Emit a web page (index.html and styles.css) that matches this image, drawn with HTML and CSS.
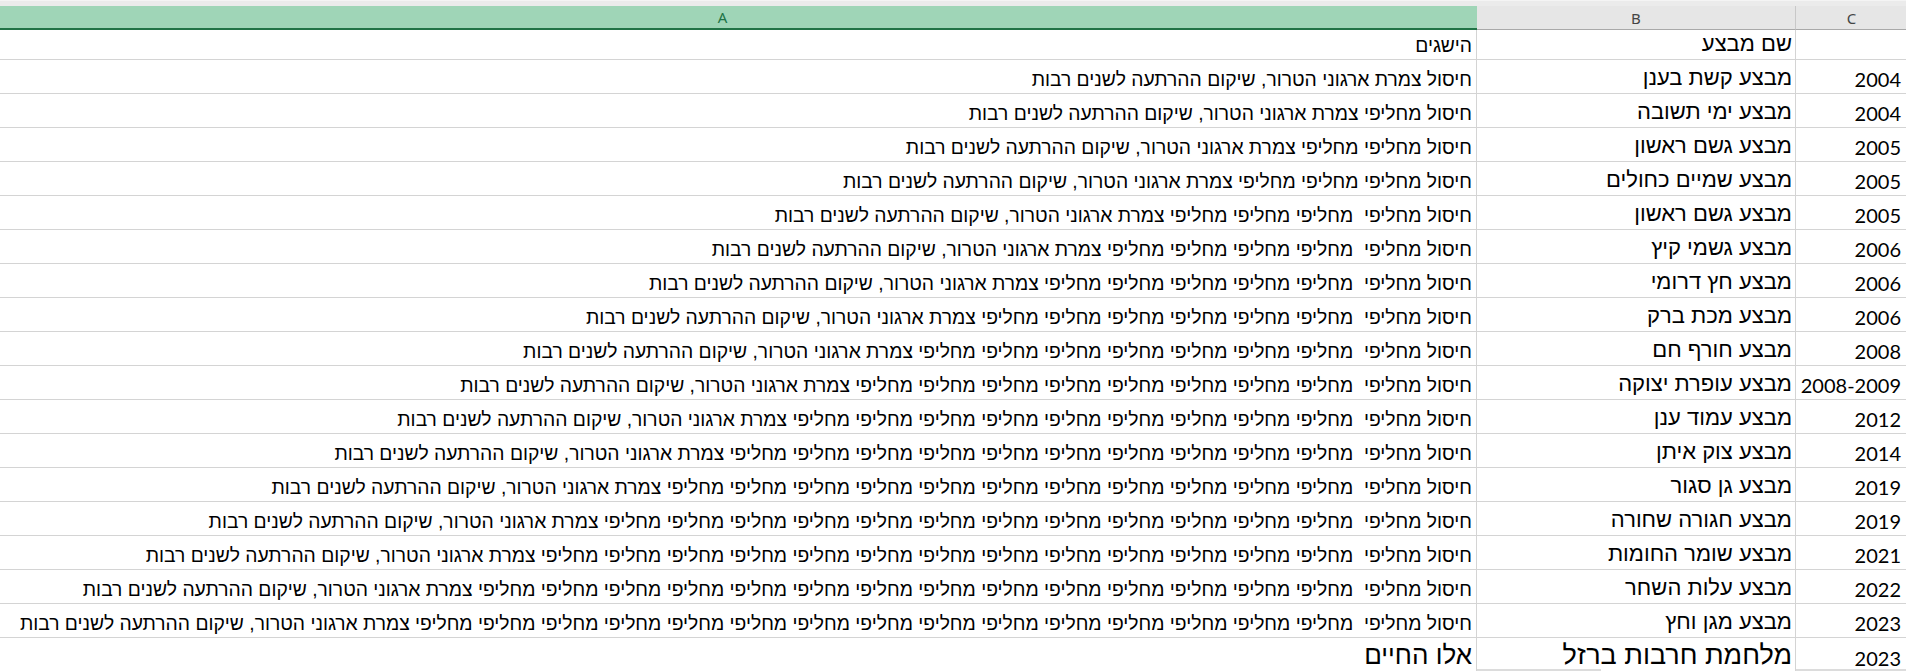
FILE: index.html
```html
<!DOCTYPE html>
<html lang="he">
<head>
    <meta charset="UTF-8">
    <meta name="viewport" content="width=device-width, initial-scale=1.0">
    <title>מבצעים - גיליון</title>
    <link rel="stylesheet" href="styles.css">
</head>
<body>
    <div class="sheet">
        <div class="topbar"></div>

        <div class="row heads">
            <div class="colhead active">A</div>
            <div class="colhead">B</div>
            <div class="colhead">C</div>
        </div>

        <div class="row first">
            <div class="cell a">הישגים</div>
            <div class="cell b">שם מבצע</div>
            <div class="cell c"></div>
        </div>

        <div class="row">
            <div class="cell a">חיסול צמרת ארגוני הטרור, שיקום ההרתעה לשנים רבות</div>
            <div class="cell b">מבצע קשת בענן</div>
            <div class="cell c">2004</div>
        </div>
        <div class="row">
            <div class="cell a">חיסול מחליפי צמרת ארגוני הטרור, שיקום ההרתעה לשנים רבות</div>
            <div class="cell b">מבצע ימי תשובה </div>
            <div class="cell c">2004</div>
        </div>
        <div class="row">
            <div class="cell a">חיסול מחליפי מחליפי צמרת ארגוני הטרור, שיקום ההרתעה לשנים רבות</div>
            <div class="cell b">מבצע גשם ראשון </div>
            <div class="cell c">2005</div>
        </div>
        <div class="row">
            <div class="cell a">חיסול מחליפי מחליפי מחליפי צמרת ארגוני הטרור, שיקום ההרתעה לשנים רבות</div>
            <div class="cell b">מבצע שמיים כחולים</div>
            <div class="cell c">2005</div>
        </div>
        <div class="row">
            <div class="cell a">חיסול מחליפי  מחליפי מחליפי מחליפי צמרת ארגוני הטרור, שיקום ההרתעה לשנים רבות</div>
            <div class="cell b">מבצע גשם ראשון </div>
            <div class="cell c">2005</div>
        </div>
        <div class="row">
            <div class="cell a">חיסול מחליפי  מחליפי מחליפי מחליפי מחליפי צמרת ארגוני הטרור, שיקום ההרתעה לשנים רבות</div>
            <div class="cell b">מבצע גשמי קיץ</div>
            <div class="cell c">2006</div>
        </div>
        <div class="row">
            <div class="cell a">חיסול מחליפי  מחליפי מחליפי מחליפי מחליפי מחליפי צמרת ארגוני הטרור, שיקום ההרתעה לשנים רבות</div>
            <div class="cell b">מבצע חץ דרומי</div>
            <div class="cell c">2006</div>
        </div>
        <div class="row">
            <div class="cell a">חיסול מחליפי  מחליפי מחליפי מחליפי מחליפי מחליפי מחליפי צמרת ארגוני הטרור, שיקום ההרתעה לשנים רבות</div>
            <div class="cell b">מבצע מכת ברק </div>
            <div class="cell c">2006</div>
        </div>
        <div class="row">
            <div class="cell a">חיסול מחליפי  מחליפי מחליפי מחליפי מחליפי מחליפי מחליפי מחליפי צמרת ארגוני הטרור, שיקום ההרתעה לשנים רבות</div>
            <div class="cell b">מבצע חורף חם</div>
            <div class="cell c">2008</div>
        </div>
        <div class="row">
            <div class="cell a">חיסול מחליפי  מחליפי מחליפי מחליפי מחליפי מחליפי מחליפי מחליפי מחליפי צמרת ארגוני הטרור, שיקום ההרתעה לשנים רבות</div>
            <div class="cell b">מבצע עופרת יצוקה</div>
            <div class="cell c">2008-2009</div>
        </div>
        <div class="row">
            <div class="cell a">חיסול מחליפי  מחליפי מחליפי מחליפי מחליפי מחליפי מחליפי מחליפי מחליפי מחליפי צמרת ארגוני הטרור, שיקום ההרתעה לשנים רבות</div>
            <div class="cell b">מבצע עמוד ענן </div>
            <div class="cell c">2012</div>
        </div>
        <div class="row">
            <div class="cell a">חיסול מחליפי  מחליפי מחליפי מחליפי מחליפי מחליפי מחליפי מחליפי מחליפי מחליפי מחליפי צמרת ארגוני הטרור, שיקום ההרתעה לשנים רבות</div>
            <div class="cell b">מבצע צוק איתן </div>
            <div class="cell c">2014</div>
        </div>
        <div class="row">
            <div class="cell a">חיסול מחליפי  מחליפי מחליפי מחליפי מחליפי מחליפי מחליפי מחליפי מחליפי מחליפי מחליפי מחליפי צמרת ארגוני הטרור, שיקום ההרתעה לשנים רבות</div>
            <div class="cell b">מבצע גן סגור </div>
            <div class="cell c">2019</div>
        </div>
        <div class="row">
            <div class="cell a">חיסול מחליפי  מחליפי מחליפי מחליפי מחליפי מחליפי מחליפי מחליפי מחליפי מחליפי מחליפי מחליפי מחליפי צמרת ארגוני הטרור, שיקום ההרתעה לשנים רבות</div>
            <div class="cell b">מבצע חגורה שחורה </div>
            <div class="cell c">2019</div>
        </div>
        <div class="row">
            <div class="cell a">חיסול מחליפי  מחליפי מחליפי מחליפי מחליפי מחליפי מחליפי מחליפי מחליפי מחליפי מחליפי מחליפי מחליפי מחליפי צמרת ארגוני הטרור, שיקום ההרתעה לשנים רבות</div>
            <div class="cell b">מבצע שומר החומות</div>
            <div class="cell c">2021</div>
        </div>
        <div class="row">
            <div class="cell a">חיסול מחליפי  מחליפי מחליפי מחליפי מחליפי מחליפי מחליפי מחליפי מחליפי מחליפי מחליפי מחליפי מחליפי מחליפי מחליפי צמרת ארגוני הטרור, שיקום ההרתעה לשנים רבות</div>
            <div class="cell b">מבצע עלות השחר </div>
            <div class="cell c">2022</div>
        </div>
        <div class="row">
            <div class="cell a">חיסול מחליפי  מחליפי מחליפי מחליפי מחליפי מחליפי מחליפי מחליפי מחליפי מחליפי מחליפי מחליפי מחליפי מחליפי מחליפי מחליפי צמרת ארגוני הטרור, שיקום ההרתעה לשנים רבות</div>
            <div class="cell b">מבצע מגן וחץ</div>
            <div class="cell c">2023</div>
        </div>
        <div class="row big">
            <div class="cell a">אלו החיים  </div>
            <div class="cell b">מלחמת חרבות ברזל</div>
            <div class="cell c">2023</div>
        </div>
        <div class="row stub">
            <div class="cell"></div>
            <div class="cell"><span class="seg"></span></div>
            <div class="cell"><span class="seg wide"></span></div>
        </div>
    </div>
</body>
</html>
```

FILE: styles.css
```css
body {
    margin: 0;
    background: #ffffff;
    overflow: hidden;
}
.sheet {
    margin-left: -32px;
    width: 1942px;
}
.topbar {
    height: 5px;
    background: #ebebeb;
    border-top: 1px solid #f4f4f4;
}
.row {
    display: grid;
    grid-template-columns: 1509px 319px 112px;
    height: 34px;
}
.heads {
    height: 24px;
}
.colhead {
    display: flex;
    align-items: center;
    justify-content: center;
    background: #e6e6e6;
    border-right: 1px solid #c8c8c8;
    border-bottom: 1px solid #a9a9a9;
    font-family: "Noto Sans", "Open Sans", sans-serif;
    font-size: 15px;
    color: #444444;
}
.colhead.active {
    background: #9fd5b7;
    color: #217346;
    border-right: none;
    border-bottom: 2px solid #217346;
}
.first {
    height: 30px;
}
.cell {
    display: flex;
    align-items: flex-end;
    overflow: visible;
    white-space: pre;
    padding-bottom: 2px;
    border-right: 1px solid #d4d4d4;
    border-bottom: 1px solid #d4d4d4;
    color: #000000;
}
.cell.a,
.cell.b {
    direction: rtl;
    font-family: "Liberation Sans", Arial, sans-serif;
}
.cell.a {
    font-size: 19.3px;
    padding-right: 4px;
}
.cell.b {
    font-size: 22px;
    padding-right: 3px;
}
.cell.c {
    justify-content: flex-end;
    font-family: Lato, "Liberation Sans", sans-serif;
    font-size: 20px;
    padding-right: 6px;
}
.big {
    height: 31px;
}
.big .cell {
    border-bottom: none;
    padding-bottom: 0;
}
.big .cell.a {
    font-size: 26px;
    line-height: 28px;
}
.big .cell.b {
    font-size: 27px;
    line-height: 28px;
}
.big .cell.c {
    line-height: 22px;
}
.stub {
    height: 3px;
}
.stub .cell {
    padding: 0;
    border-bottom: none;
}
.seg {
    display: block;
    width: 124px;
    height: 3px;
    background: #dcdcdc;
}
.seg.wide {
    width: 112px;
}
```
